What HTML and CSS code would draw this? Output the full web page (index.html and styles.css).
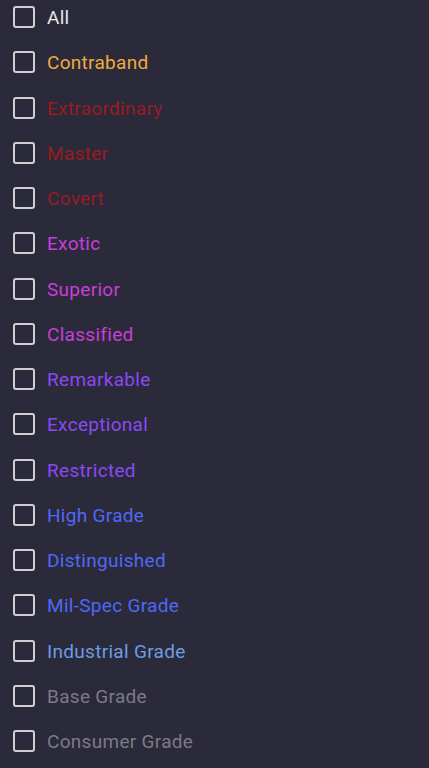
FILE: index.html
```html
<!DOCTYPE html>
<html lang="en">
<head>
<meta charset="utf-8">
<title>Rarity filter</title>
<link rel="stylesheet" href="styles.css">
</head>
<body>
<ul class="filter-list">
  <li class="filter-item"><span class="box"></span><span class="label r-all">All</span></li>
  <li class="filter-item"><span class="box"></span><span class="label r-contraband">Contraband</span></li>
  <li class="filter-item"><span class="box"></span><span class="label r-red">Extraordinary</span></li>
  <li class="filter-item"><span class="box"></span><span class="label r-red">Master</span></li>
  <li class="filter-item"><span class="box"></span><span class="label r-red">Covert</span></li>
  <li class="filter-item"><span class="box"></span><span class="label r-pink">Exotic</span></li>
  <li class="filter-item"><span class="box"></span><span class="label r-pink">Superior</span></li>
  <li class="filter-item"><span class="box"></span><span class="label r-pink">Classified</span></li>
  <li class="filter-item"><span class="box"></span><span class="label r-purple">Remarkable</span></li>
  <li class="filter-item"><span class="box"></span><span class="label r-purple">Exceptional</span></li>
  <li class="filter-item"><span class="box"></span><span class="label r-purple">Restricted</span></li>
  <li class="filter-item"><span class="box"></span><span class="label r-blue">High Grade</span></li>
  <li class="filter-item"><span class="box"></span><span class="label r-blue">Distinguished</span></li>
  <li class="filter-item"><span class="box"></span><span class="label r-blue">Mil-Spec Grade</span></li>
  <li class="filter-item"><span class="box"></span><span class="label r-light">Industrial Grade</span></li>
  <li class="filter-item"><span class="box"></span><span class="label r-grey">Base Grade</span></li>
  <li class="filter-item"><span class="box"></span><span class="label r-grey">Consumer Grade</span></li>
</ul>
</body>
</html>
```
FILE: styles.css
```css
html, body {
  margin: 0;
  padding: 0;
  background: #2b2a3b;
}
body {
  font-family: Roboto, "Noto Sans", "DejaVu Sans", sans-serif;
  font-size: 19px;
  letter-spacing: 0.3px;
}
.filter-list {
  list-style: none;
  margin: 0;
  padding: 6px 0 0 13px;
  display: flex;
  flex-direction: column;
  gap: 23.25px;
}
.filter-item {
  display: flex;
  align-items: center;
  gap: 12px;
  height: 22px;
}
.box {
  width: 22px;
  height: 22px;
  box-sizing: border-box;
  border: 2px solid #d0d0d0;
  border-radius: 3px;
  flex: none;
}
.label {
  line-height: 22px;
  padding-top: 2px;
}
.r-all { color: #e6e6e6; }
.r-contraband { color: #f2aa3c; }
.r-red { color: #991b1f; }
.r-pink { color: #c93ed9; }
.r-purple { color: #8a49f5; }
.r-blue { color: #5068f6; }
.r-light { color: #6a9ee0; }
.r-grey { color: #7c7b83; }
```
